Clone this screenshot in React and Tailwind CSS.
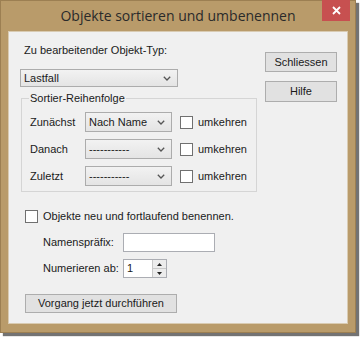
import React from 'react'

const UI_FONT = { fontFamily: '"Liberation Sans", Arial, sans-serif' }

function Chevron() {
  return (
    <svg width="8" height="5" viewBox="0 0 8 5" className="shrink-0">
      <path d="M0.8 0.8 L4 4 L7.2 0.8" fill="none" stroke="#555" strokeWidth="1.3" />
    </svg>
  )
}

function Combo({ value, className = '' }) {
  return (
    <div
      className={`flex items-center justify-between border border-[#acacac] bg-gradient-to-b from-[#f2f2f2] to-[#e4e4e4] pl-[3px] pr-[6px] ${className}`}
    >
      <span className="leading-none">{value}</span>
      <Chevron />
    </div>
  )
}

function Check({ className = '' }) {
  return <div className={`h-[13px] w-[13px] shrink-0 border border-[#707070] bg-white ${className}`} />
}

function Button({ children, className = '' }) {
  return (
    <div
      className={`flex items-center justify-center border border-[#adadad] bg-[#e1e1e1] leading-none ${className}`}
    >
      {children}
    </div>
  )
}

function SortRow({ label, value }) {
  return (
    <div className="flex h-[20px] items-center">
      <span className="w-[63px] pl-[8px]">{label}</span>
      <Combo value={value} className="h-[20px] w-[87px]" />
      <Check className="ml-[8px]" />
      <span className="ml-[5px]">umkehren</span>
    </div>
  )
}

export default function App() {
  return (
    <div className="h-[337px] w-[362px] bg-white">
      <div className="flex h-[333px] w-[356px] flex-col border border-[#9c7f52] bg-[#b99b6a] shadow-[3px_3px_1px_rgba(0,0,0,0.55)]">
        {/* title bar */}
        <div className="relative flex h-[30px] shrink-0 items-center justify-center">
          <span
            className="text-[14px] leading-none text-[#2a2a2a]"
            style={{ fontFamily: '"Open Sans", "Noto Sans", sans-serif' }}
          >
            Objekte sortieren und umbenennen
          </span>
          <div className="absolute right-[5px] top-[-1px] flex h-[21px] w-[28px] items-center justify-center bg-[#c75050]">
            <svg width="9" height="9" viewBox="0 0 9 9">
              <path d="M1 1 L8 8 M8 1 L1 8" stroke="#fff" strokeWidth="1.8" />
            </svg>
          </div>
        </div>

        {/* client area */}
        <div
          className="mx-[7px] flex h-[293px] flex-col border border-[#d9cbb2] bg-[#f0f0f0] text-[11px] leading-[13px] text-[#1a1a1a]"
          style={UI_FONT}
        >
          <div className="flex">
            <div className="ml-[11px] flex w-[237px] flex-col">
              <div className="mt-[12px] pl-[4px]">Zu bearbeitender Objekt-Typ:</div>
              <Combo value="Lastfall" className="mt-[12px] h-[18px] w-[158px]" />
              <fieldset className="ml-[1px] mt-[5px] w-[236px] border border-[#d5d5d5] pb-[5px]">
                <legend className="ml-[7px] px-[1px]">Sortier-Reihenfolge</legend>
                <div className="mt-[7px] flex flex-col gap-[7px]">
                  <SortRow label="Zunächst" value="Nach Name" />
                  <SortRow label="Danach" value="-----------" />
                  <SortRow label="Zuletzt" value="-----------" />
                </div>
              </fieldset>
            </div>
            <div className="ml-[8px] mt-[20px] flex flex-col gap-[9px]">
              <Button className="h-[20px] w-[72px]">Schliessen</Button>
              <Button className="h-[21px] w-[72px]">Hilfe</Button>
            </div>
          </div>

          <div className="ml-[16px] mt-[18px] flex items-center">
            <Check />
            <span className="ml-[5px]">Objekte neu und fortlaufend benennen.</span>
          </div>

          <div className="ml-[34px] mt-[10px] flex items-center">
            <span className="w-[80px]">Namenspräfix:</span>
            <div className="h-[19px] w-[92px] border border-[#abadb3] bg-white" />
          </div>

          <div className="ml-[34px] mt-[7px] flex items-center">
            <span className="w-[80px]">Numerieren ab:</span>
            <div className="flex h-[19px] w-[44px] items-stretch border border-[#abadb3] bg-white">
              <span className="flex flex-1 items-center pl-[3px]">1</span>
              <div className="flex w-[14px] flex-col border-l border-[#c8c8c8]">
                <div className="flex flex-1 items-center justify-center border-b border-[#c8c8c8] bg-[#ececec]">
                  <svg width="5" height="3" viewBox="0 0 5 3"><path d="M0 3 L2.5 0 L5 3 Z" fill="#222" /></svg>
                </div>
                <div className="flex flex-1 items-center justify-center bg-[#ececec]">
                  <svg width="5" height="3" viewBox="0 0 5 3"><path d="M0 0 L2.5 3 L5 0 Z" fill="#222" /></svg>
                </div>
              </div>
            </div>
          </div>

          <Button className="ml-[16px] mt-[16px] h-[19px] w-[152px]">Vorgang jetzt durchführen</Button>
        </div>
      </div>
    </div>
  )
}
